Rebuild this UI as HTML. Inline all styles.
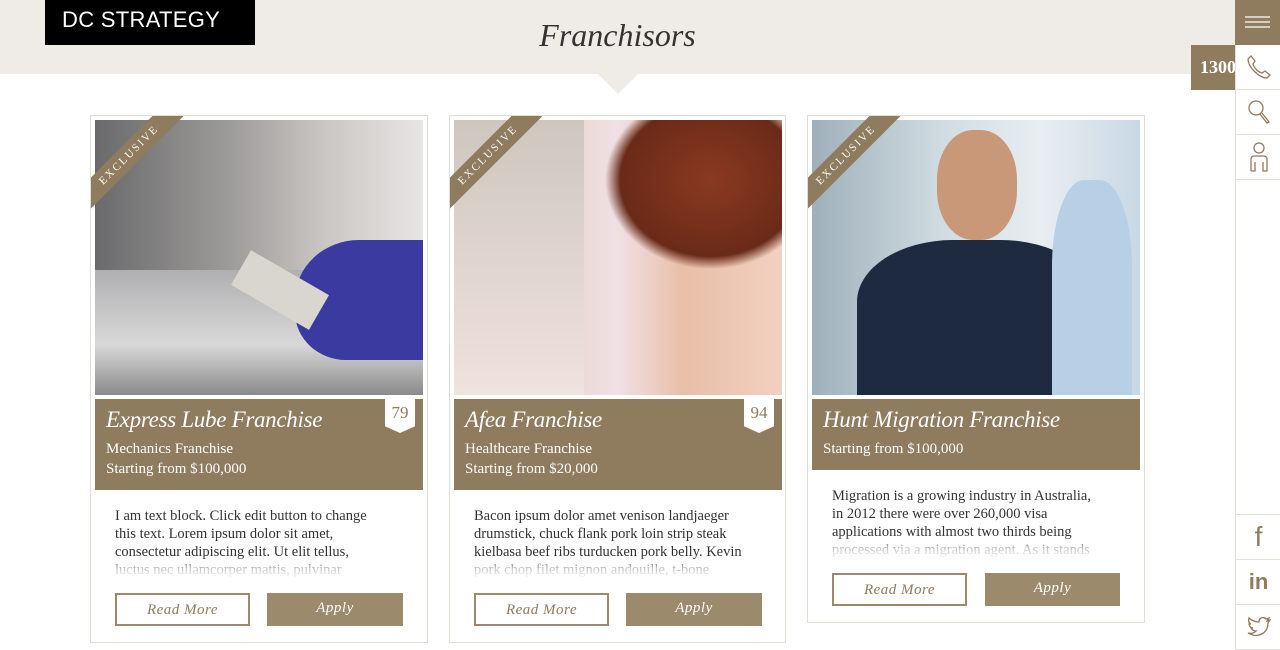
<!DOCTYPE html>
<html><head><meta charset="utf-8"><style>
*{margin:0;padding:0;box-sizing:border-box}
body{width:1280px;height:650px;overflow:hidden;background:#fff;position:relative;font-family:"Liberation Serif",serif}
.hdr{position:absolute;left:0;top:0;width:1235px;height:74px;background:#efebe6}
.tri{position:absolute;left:598px;top:74px;width:0;height:0;border-left:20px solid transparent;border-right:20px solid transparent;border-top:20px solid #efebe6}
.logo{position:absolute;left:45px;top:0;width:210px;height:45px;background:#000;color:#fff;font-family:"Liberation Sans",sans-serif;font-size:22px;line-height:40px;padding-left:17px;letter-spacing:.3px}
.title{position:absolute;left:0;width:1235px;top:17px;text-align:center;font-style:italic;font-size:32px;color:#333}
.side{position:absolute;left:1235px;top:0;width:45px;height:650px;border-left:1px solid #e3e0dc;background:#fff}
.side .b{position:absolute;left:0;width:45px;height:45px;border-bottom:1px solid #e3e0dc;display:flex;align-items:center;justify-content:center}
.menu{position:absolute;left:1235px;top:0;width:45px;height:45px;background:#8f7b5e}
.ph{position:absolute;left:1191px;top:45px;width:44px;height:45px;background:#8f7b5e;color:#fff;font-weight:bold;font-size:18px;line-height:45px;padding-left:9px;overflow:hidden;white-space:nowrap}
.card{position:absolute;top:115px;width:338px;border:1px solid #e0ddd8;background:#fff;overflow:hidden}
.img{position:absolute;left:4px;top:4px;width:328px;height:275px;overflow:hidden}
.rib{position:absolute;left:-32px;top:28px;width:140px;height:22px;background:#8f7b5e;transform:rotate(-45deg);color:#fff;font-size:11px;letter-spacing:2px;text-align:center;line-height:22px}
.bx{position:absolute;left:4px;top:283px;width:328px;background:#8f7b5e;color:#fff;padding:6px 11px}
.bx h2{font-style:italic;font-weight:normal;font-size:23px;line-height:30px;margin-bottom:4px;letter-spacing:-.3px}
.bx p{font-size:15px;line-height:20px}
.num{position:absolute;right:8px;top:0;width:30px;height:34px;background:#fff;color:#8f7b5e;font-size:17px;text-align:center;line-height:28px;clip-path:polygon(0 0,100% 0,100% 80%,50% 100%,0 80%)}
.txt{position:absolute;left:24px;width:272px;font-size:14.5px;line-height:18px;color:#333;height:72px;overflow:hidden;-webkit-mask-image:linear-gradient(#000 68%,rgba(0,0,0,.3) 85%,transparent)}
.btn{position:absolute;width:135px;height:33px;font-style:italic;font-size:15px;text-align:center;line-height:31px;letter-spacing:.5px}
.rm{border:2px solid #9c8a6c;color:#8f7b5e}
.ap{background:#9c8a6c;color:#fff;width:136px}
</style></head><body>
<div class="hdr"></div><div class="tri"></div>
<div class="logo">DC STRATEGY</div>
<div class="title">Franchisors</div>
<div class="ph">1300</div>
<div class="side">
<div class="b" style="top:45px"><svg width="28" height="28" viewBox="0 0 28 28" fill="none" stroke="#8f7b5e" stroke-width="1.3"><path d="M6 3l4 5-2 3c1 4 5 8 9 9l3-2 5 4-3 3C14 25 3 14 3 6z"/></svg></div>
<div class="b" style="top:90px"><svg width="28" height="28" viewBox="0 0 28 28" fill="none" stroke="#8f7b5e" stroke-width="1.3"><circle cx="11" cy="10" r="7"/><path d="M15 16l7 9 2-1-7-9"/></svg></div>
<div class="b" style="top:135px"><svg width="28" height="32" viewBox="0 0 28 32" fill="none" stroke="#8f7b5e" stroke-width="1.3"><circle cx="14" cy="7" r="5"/><path d="M6 30V18a3 3 0 0 1 3-3h10a3 3 0 0 1 3 3v12h-4V21M10 21v9H6"/></svg></div>
<div class="b" style="top:470px"></div>
<div class="b" style="top:515px;color:#8f7b5e;font-family:'Liberation Sans';font-size:28px">f</div>
<div class="b" style="top:560px;color:#8f7b5e;font-family:'Liberation Sans';font-size:22px;font-weight:bold">in</div>
<div class="b" style="top:605px"><svg width="24" height="20" viewBox="0 0 24 20" fill="none" stroke="#8f7b5e" stroke-width="1.3"><path d="M23 3l-3 1 2-3-3 1C16-1 12 1 12 5 8 5 4 3 2 1c-1 3 0 5 2 6H2c0 2 2 4 4 4H4c1 2 3 3 5 3-2 2-5 3-8 2 10 6 20 0 20-10z"/></svg></div>
</div>
<div class="menu"><svg width="45" height="45"><g stroke="#fff" stroke-width="1.3"><line x1="10" y1="17" x2="35" y2="17"/><line x1="10" y1="22" x2="35" y2="22"/><line x1="10" y1="27" x2="35" y2="27"/></g></svg></div>

<div class="card" style="left:90px;height:528px">
<div class="img" style="background:linear-gradient(90deg,#6a6a6c 0%,#9c9a98 40%,#c9c6c3 70%,#e8e6e4 100%)"><div style="position:absolute;left:0;top:150px;width:328px;height:125px;background:linear-gradient(#b0b0b2,#d8d8d8 60%,#8a8a8a)"></div><div style="position:absolute;left:200px;top:120px;width:128px;height:120px;background:#3a3aa0;border-radius:50% 0 0 40%"></div><div style="position:absolute;left:140px;top:150px;width:90px;height:40px;background:#d9d6d0;transform:rotate(30deg)"></div></div>
<div class="rib">EXCLUSIVE</div>
<div class="bx" style="height:91px"><h2>Express Lube Franchise</h2><p>Mechanics Franchise<br>Starting from $100,000</p><div class="num">79</div></div>
<div class="txt" style="top:391px">I am text block. Click edit button to change this text. Lorem ipsum dolor sit amet, consectetur adipiscing elit. Ut elit tellus, luctus nec ullamcorper mattis, pulvinar</div>
<div class="btn rm" style="left:24px;top:477px">Read More</div>
<div class="btn ap" style="left:176px;top:477px">Apply</div>
</div>

<div class="card" style="left:449px;width:337px;height:528px">
<div class="img" style="background:linear-gradient(90deg,#d9c6b8 0%,#e9d6ce 30%,#f0e0e4 50%,#e8bfa8 70%,#f2d0c0 100%)"><div style="position:absolute;left:0;top:0;width:130px;height:275px;background:linear-gradient(#cfc6c0,#f0e2dc)"></div><div style="position:absolute;left:150px;top:0;width:178px;height:150px;background:radial-gradient(ellipse at 60% 40%,#8a3a20,#6a2a18 60%,transparent 70%)"></div></div>
<div class="rib">EXCLUSIVE</div>
<div class="bx" style="height:91px"><h2>Afea Franchise</h2><p>Healthcare Franchise<br>Starting from $20,000</p><div class="num">94</div></div>
<div class="txt" style="top:391px">Bacon ipsum dolor amet venison landjaeger drumstick, chuck flank pork loin strip steak kielbasa beef ribs turducken pork belly. Kevin pork chop filet mignon andouille, t-bone</div>
<div class="btn rm" style="left:24px;top:477px">Read More</div>
<div class="btn ap" style="left:176px;top:477px">Apply</div>
</div>

<div class="card" style="left:807px;height:508px">
<div class="img" style="background:linear-gradient(90deg,#9fb0ba,#d0dce2 40%,#e8eef2 70%,#c8d8e4)"><div style="position:absolute;left:45px;top:120px;width:240px;height:155px;background:#1e2a40;border-radius:40% 40% 0 0"></div><div style="position:absolute;left:125px;top:10px;width:80px;height:110px;background:#c89878;border-radius:45%"></div><div style="position:absolute;left:240px;top:60px;width:80px;height:215px;background:#b8d0e6;border-radius:40% 40% 0 0"></div></div>
<div class="rib">EXCLUSIVE</div>
<div class="bx" style="height:71px"><h2>Hunt Migration Franchise</h2><p>Starting from $100,000</p></div>
<div class="txt" style="top:371px">Migration is a growing industry in Australia, in 2012 there were over 260,000 visa applications with almost two thirds being processed via a migration agent. As it stands</div>
<div class="btn rm" style="left:24px;top:457px">Read More</div>
<div class="btn ap" style="left:177px;top:457px;width:135px">Apply</div>
</div>
</body></html>
